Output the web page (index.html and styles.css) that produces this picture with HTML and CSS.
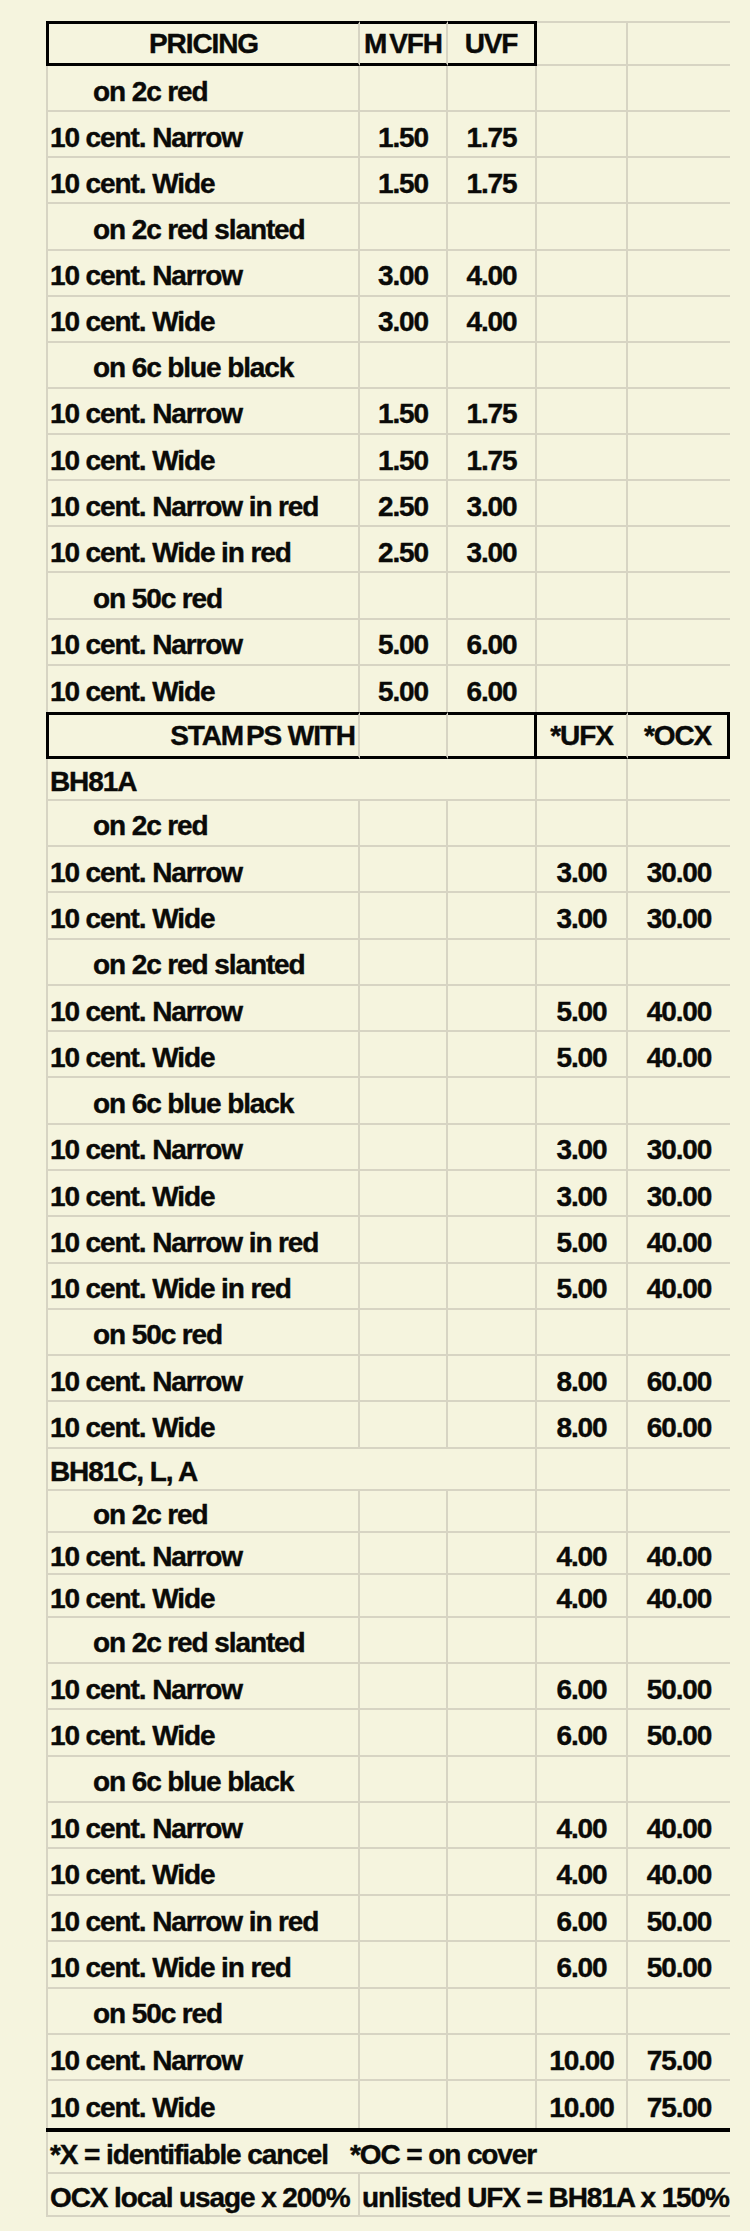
FILE: index.html
```html
<!DOCTYPE html>
<html lang="en">
<head>
<meta charset="utf-8">
<title>Pricing</title>
<link rel="stylesheet" href="styles.css">
</head>
<body>
<div class="sheet">
  <div class="row hdr hdr1">
    <div class="c k ctr">PRICING</div>
    <div class="c k"><span class="mg">M</span>VFH</div>
    <div class="c k kr">UVF</div>
    <div class="c gt"></div>
    <div class="c gt"></div>
  </div>

  <div class="grp g1">
    <div class="row"><div class="c ind">on 2c red</div><div class="c"></div><div class="c"></div><div class="c"></div><div class="c"></div></div>
    <div class="row"><div class="c">10 cent. Narrow</div><div class="c">1.50</div><div class="c">1.75</div><div class="c"></div><div class="c"></div></div>
    <div class="row"><div class="c">10 cent. Wide</div><div class="c">1.50</div><div class="c">1.75</div><div class="c"></div><div class="c"></div></div>
    <div class="row"><div class="c ind">on 2c red slanted</div><div class="c"></div><div class="c"></div><div class="c"></div><div class="c"></div></div>
    <div class="row"><div class="c">10 cent. Narrow</div><div class="c">3.00</div><div class="c">4.00</div><div class="c"></div><div class="c"></div></div>
    <div class="row"><div class="c">10 cent. Wide</div><div class="c">3.00</div><div class="c">4.00</div><div class="c"></div><div class="c"></div></div>
    <div class="row"><div class="c ind">on 6c blue black</div><div class="c"></div><div class="c"></div><div class="c"></div><div class="c"></div></div>
    <div class="row"><div class="c">10 cent. Narrow</div><div class="c">1.50</div><div class="c">1.75</div><div class="c"></div><div class="c"></div></div>
    <div class="row"><div class="c">10 cent. Wide</div><div class="c">1.50</div><div class="c">1.75</div><div class="c"></div><div class="c"></div></div>
    <div class="row"><div class="c">10 cent. Narrow in red</div><div class="c">2.50</div><div class="c">3.00</div><div class="c"></div><div class="c"></div></div>
    <div class="row"><div class="c">10 cent. Wide in red</div><div class="c">2.50</div><div class="c">3.00</div><div class="c"></div><div class="c"></div></div>
    <div class="row"><div class="c ind">on 50c red</div><div class="c"></div><div class="c"></div><div class="c"></div><div class="c"></div></div>
    <div class="row"><div class="c">10 cent. Narrow</div><div class="c">5.00</div><div class="c">6.00</div><div class="c"></div><div class="c"></div></div>
    <div class="row nb"><div class="c">10 cent. Wide</div><div class="c">5.00</div><div class="c">6.00</div><div class="c"></div><div class="c"></div></div>
  </div>

  <div class="row hdr hdr2">
    <div class="c k rt">STA<span class="mg">M</span>PS WITH</div>
    <div class="c k"></div>
    <div class="c k kr"></div>
    <div class="c k">*UFX</div>
    <div class="c k kr">*OCX</div>
  </div>

  <div class="row short"><div class="c span3">BH81A</div><div class="c"></div><div class="c"></div></div>

  <div class="grp g2">
    <div class="row"><div class="c ind">on 2c red</div><div class="c"></div><div class="c"></div><div class="c"></div><div class="c"></div></div>
    <div class="row"><div class="c">10 cent. Narrow</div><div class="c"></div><div class="c"></div><div class="c">3.00</div><div class="c">30.00</div></div>
    <div class="row"><div class="c">10 cent. Wide</div><div class="c"></div><div class="c"></div><div class="c">3.00</div><div class="c">30.00</div></div>
    <div class="row"><div class="c ind">on 2c red slanted</div><div class="c"></div><div class="c"></div><div class="c"></div><div class="c"></div></div>
    <div class="row"><div class="c">10 cent. Narrow</div><div class="c"></div><div class="c"></div><div class="c">5.00</div><div class="c">40.00</div></div>
    <div class="row"><div class="c">10 cent. Wide</div><div class="c"></div><div class="c"></div><div class="c">5.00</div><div class="c">40.00</div></div>
    <div class="row"><div class="c ind">on 6c blue black</div><div class="c"></div><div class="c"></div><div class="c"></div><div class="c"></div></div>
    <div class="row"><div class="c">10 cent. Narrow</div><div class="c"></div><div class="c"></div><div class="c">3.00</div><div class="c">30.00</div></div>
    <div class="row"><div class="c">10 cent. Wide</div><div class="c"></div><div class="c"></div><div class="c">3.00</div><div class="c">30.00</div></div>
    <div class="row"><div class="c">10 cent. Narrow in red</div><div class="c"></div><div class="c"></div><div class="c">5.00</div><div class="c">40.00</div></div>
    <div class="row"><div class="c">10 cent. Wide in red</div><div class="c"></div><div class="c"></div><div class="c">5.00</div><div class="c">40.00</div></div>
    <div class="row"><div class="c ind">on 50c red</div><div class="c"></div><div class="c"></div><div class="c"></div><div class="c"></div></div>
    <div class="row"><div class="c">10 cent. Narrow</div><div class="c"></div><div class="c"></div><div class="c">8.00</div><div class="c">60.00</div></div>
    <div class="row"><div class="c">10 cent. Wide</div><div class="c"></div><div class="c"></div><div class="c">8.00</div><div class="c">60.00</div></div>
  </div>

  <div class="grp g3">
    <div class="row"><div class="c span3">BH81C, L, A</div><div class="c"></div><div class="c"></div></div>
    <div class="row"><div class="c ind">on 2c red</div><div class="c"></div><div class="c"></div><div class="c"></div><div class="c"></div></div>
    <div class="row"><div class="c">10 cent. Narrow</div><div class="c"></div><div class="c"></div><div class="c">4.00</div><div class="c">40.00</div></div>
    <div class="row"><div class="c">10 cent. Wide</div><div class="c"></div><div class="c"></div><div class="c">4.00</div><div class="c">40.00</div></div>
  </div>

  <div class="grp g4">
    <div class="row"><div class="c ind">on 2c red slanted</div><div class="c"></div><div class="c"></div><div class="c"></div><div class="c"></div></div>
    <div class="row"><div class="c">10 cent. Narrow</div><div class="c"></div><div class="c"></div><div class="c">6.00</div><div class="c">50.00</div></div>
    <div class="row"><div class="c">10 cent. Wide</div><div class="c"></div><div class="c"></div><div class="c">6.00</div><div class="c">50.00</div></div>
    <div class="row"><div class="c ind">on 6c blue black</div><div class="c"></div><div class="c"></div><div class="c"></div><div class="c"></div></div>
    <div class="row"><div class="c">10 cent. Narrow</div><div class="c"></div><div class="c"></div><div class="c">4.00</div><div class="c">40.00</div></div>
    <div class="row"><div class="c">10 cent. Wide</div><div class="c"></div><div class="c"></div><div class="c">4.00</div><div class="c">40.00</div></div>
    <div class="row"><div class="c">10 cent. Narrow in red</div><div class="c"></div><div class="c"></div><div class="c">6.00</div><div class="c">50.00</div></div>
    <div class="row"><div class="c">10 cent. Wide in red</div><div class="c"></div><div class="c"></div><div class="c">6.00</div><div class="c">50.00</div></div>
    <div class="row"><div class="c ind">on 50c red</div><div class="c"></div><div class="c"></div><div class="c"></div><div class="c"></div></div>
    <div class="row"><div class="c">10 cent. Narrow</div><div class="c"></div><div class="c"></div><div class="c">10.00</div><div class="c">75.00</div></div>
    <div class="row nb"><div class="c">10 cent. Wide</div><div class="c"></div><div class="c"></div><div class="c">10.00</div><div class="c">75.00</div></div>
  </div>

  <div class="foot">
    <div class="row f1"><div class="c span5 note"><span class="note-a">*X = identifiable cancel</span><span>*OC = on cover</span></div></div>
    <div class="row f2"><div class="c">OCX local usage x 200%</div><div class="c span4 left">unlisted UFX = BH81A x 150%</div></div>
  </div>
</div>
</body>
</html>
```

FILE: styles.css
```css
:root {
  --g: #d7d4c3;
  --bg: #f5f4de;
  --ink: #0a0a08;
}

html, body {
  margin: 0;
  padding: 0;
  background: var(--bg);
}

body {
  height: 2231px;
  overflow: hidden;
  font-family: "Liberation Sans", Arial, sans-serif;
  font-weight: bold;
  font-size: 28px;
  letter-spacing: -1.1px;
  color: var(--ink);
  -webkit-text-stroke: 0.4px var(--ink);
}

.sheet {
  margin: 21px 0 0 46px;
  width: 684px;
}

.row {
  display: grid;
  grid-template-columns: 314px 88px 89px 91px 102px;
  height: var(--rh, 46px);
}

.g1 { --rh: 46.14px; }
.g2 { --rh: 46.29px; }
.g3 { --rh: 42.25px; }
.g4 { --rh: 46.36px; }

.c {
  box-sizing: border-box;
  min-width: 0;
  display: flex;
  align-items: center;
  justify-content: center;
  padding-top: 6px;
  line-height: 31px;
  white-space: nowrap;
  border-right: 2px solid var(--g);
  border-bottom: 2px solid var(--g);
}

.c:first-child {
  border-left: 2px solid var(--g);
  justify-content: flex-start;
  padding-left: 2px;
}

.c:last-child {
  border-right: 0;
}

.c.ind {
  padding-left: 45px;
}

.span3 { grid-column: span 3; }
.span4 { grid-column: span 4; }
.span5 { grid-column: span 5; }

.c.left {
  justify-content: flex-start;
  padding-left: 2px;
}

.row.nb .c {
  border-bottom: 0;
}

.row.short {
  height: 42px;
}

/* header rows with heavy box */
.hdr .c {
  padding-top: 0;
}

.hdr1 {
  height: 45px;
}

.hdr2 {
  height: 47px;
}

.hdr .k {
  border-top: 3px solid #000;
  border-bottom: 3px solid #000;
}

.hdr .k:first-child {
  border-left: 3px solid #000;
}

.hdr .kr {
  border-right: 3px solid #000;
}

.hdr .gt {
  border-top: 2px solid var(--g);
}

.hdr .c.ctr {
  justify-content: center;
  padding-left: 0;
}

.hdr .c.rt {
  justify-content: flex-end;
  padding-left: 0;
  padding-right: 3px;
}

.mg {
  margin-right: 3px;
}

/* footer notes */
.foot {
  border-top: 4px solid #000;
}

.f1 { height: 42px; }
.f2 { height: 43px; }

.note-a {
  width: 300px;
  flex: 0 0 300px;
}
```
